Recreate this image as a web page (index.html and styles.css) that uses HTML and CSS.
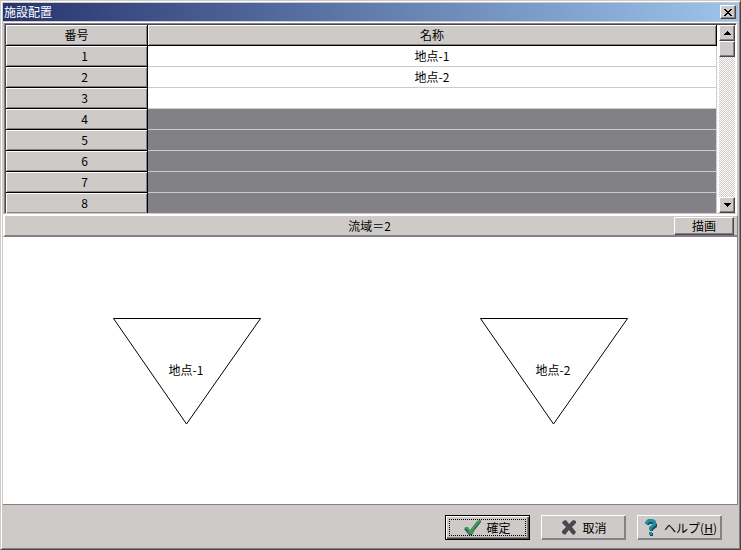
FILE: index.html
```html
<!DOCTYPE html>
<html lang="ja">
<head>
    <meta charset="UTF-8">
    <meta name="viewport" content="width=device-width, initial-scale=1.0">
    <title>施設配置</title>
    <link rel="stylesheet" href="styles.css">
</head>
<body>
    <div class="window">
        <header class="titlebar">
            <h1>施設配置</h1>
            <button type="button" class="close" aria-label="閉じる">
                <svg width="8" height="7" viewBox="0 0 8 7" shape-rendering="crispEdges">
                    <path d="M0 0h2v1h1v1h2V1h1V0h2v1H7v1H6v1H5v1h1v1h1v1h1v1H6V6H5V5H3v1H2v1H0V6h1V5h1V4h1V3H2V2H1V1H0z"/>
                </svg>
            </button>
        </header>

        <div class="grid-frame">
            <div class="grid-view">
                <table>
                    <thead>
                        <tr><th class="num">番号</th><th>名称</th></tr>
                    </thead>
                    <tbody>
                        <tr><th>1</th><td>地点-1</td></tr>
                        <tr><th>2</th><td>地点-2</td></tr>
                        <tr><th>3</th><td></td></tr>
                        <tr class="disabled"><th>4</th><td></td></tr>
                        <tr class="disabled"><th>5</th><td></td></tr>
                        <tr class="disabled"><th>6</th><td></td></tr>
                        <tr class="disabled"><th>7</th><td></td></tr>
                        <tr class="disabled"><th>8</th><td></td></tr>
                    </tbody>
                </table>
            </div>
            <div class="scrollbar">
                <button type="button" aria-label="上へ">
                    <svg width="7" height="4" viewBox="0 0 7 4" shape-rendering="crispEdges">
                        <path d="M3 0h1v1h1v1h1v1h1v1H0V3h1V2h1V1h1z"/>
                    </svg>
                </button>
                <div class="thumb"></div>
                <button type="button" class="down" aria-label="下へ">
                    <svg width="7" height="4" viewBox="0 0 7 4" shape-rendering="crispEdges">
                        <path d="M0 0h7v1H6v1H5v1H4v1H3V3H2V2H1V1H0z"/>
                    </svg>
                </button>
            </div>
        </div>

        <div class="toolbar">
            <span class="status">流域＝2</span>
            <button type="button" class="draw">描画</button>
        </div>

        <main class="canvas">
            <svg width="148" height="107" viewBox="0 0 148 107">
                <path class="node" d="M.5.5h147L73.5 106z"/>
                <text x="73" y="57">地点-1</text>
            </svg>
            <svg width="148" height="107" viewBox="0 0 148 107">
                <path class="node" d="M.5.5h147L73.5 106z"/>
                <text x="73" y="57">地点-2</text>
            </svg>
        </main>

        <footer class="actions">
            <button type="button" class="default">
                <svg width="17" height="16" viewBox="0 0 17 16">
                    <path fill="#27417c" d="M0 9l1 1 4 5h3l2-4 7-9V1h-2L6 11 3 8z"/>
                    <path fill="#3f9a45" d="M0 8l2-1h2l2 3 7-9 2-1h2v1l-6 7-3 6H5l-2-4z"/>
                </svg>
                確定
            </button>
            <button type="button">
                <svg width="17" height="15" viewBox="-2 0 17 15">
                    <path fill="#48484c" d="M1 1l3-1 3 4 4-4 3 1v2l-4 4 4 5-2 3-2-1-3-4-4 5-3-2v-2l4-4L0 3z"/>
                </svg>
                取消
            </button>
            <button type="button">
                <svg width="17" height="17" viewBox="-3 0 17 17">
                    <path fill="#1e4a68" d="M1 4l2-2h6l3 3v3l-4 3v1H5V9l3-3V5H5L4 6H2zM5 14h3v3H5z"/>
                    <path fill="#1f8f9f" d="M0 3l3-3h5l3 2v4L7 9v2H4V8l4-3V4L7 3H4L3 5H0zM4 13h3v3H4z"/>
                </svg>
                <span>ヘルプ(<u>H</u>)</span>
            </button>
        </footer>
    </div>
</body>
</html>
```
FILE: styles.css
```css
* {
    margin: 0;
    padding: 0;
    box-sizing: border-box;
}

:root {
    --face: #cecac7;
    --shadow: #828186;
    --dark: #48474c;
}

body {
    font-family: "Noto Sans CJK JP", sans-serif;
    font-size: 12px;
    line-height: 16px;
    color: #000;
}

button {
    font: inherit;
    color: inherit;
    display: flex;
    align-items: center;
    justify-content: center;
    background: var(--face);
    border: 1px solid;
    border-color: #fff var(--dark) var(--dark) #fff;
    box-shadow: inset -1px -1px var(--shadow);
}

.window {
    display: flex;
    flex-direction: column;
    min-height: 100vh;
    padding: 2px 2px 0 1px;
    background: var(--face);
    border: 1px solid;
    border-color: var(--face) var(--dark) var(--dark) var(--face);
    box-shadow: inset 1px 1px #fff, inset -1px -1px var(--shadow);
}

.titlebar {
    display: flex;
    align-items: center;
    justify-content: space-between;
    height: 18px;
    margin-left: 1px;
    padding: 0 2px 0 1px;
    background: linear-gradient(to right, #26346e, #9cc4ec);
}

.titlebar h1 {
    font-size: 12px;
    font-weight: normal;
    color: #fff;
}

.close {
    width: 16px;
    height: 14px;
}

.grid-frame {
    display: flex;
    height: 191px;
    margin: 2px 1px 0 2px;
    background: #fff;
    border: 1px solid;
    border-color: var(--shadow) #fff var(--face) var(--shadow);
    box-shadow: inset 1px 1px var(--dark), 0 -1px #fff;
    padding: 1px 1px 0 1px;
    overflow: hidden;
}

.grid-view {
    flex: 1;
    overflow: hidden;
    margin-right: 2px;
}

table {
    width: 100%;
    table-layout: fixed;
    border-collapse: separate;
    border-spacing: 0;
}

.num {
    width: 142px;
}

th,
td {
    height: 21px;
    font-weight: normal;
    line-height: 16px;
    text-align: center;
}

th {
    background: var(--face);
    border-right: 1px solid #000;
    border-bottom: 1px solid #000;
    box-shadow: inset 1px 1px #fff, inset -1px -1px var(--shadow);
}

tbody th {
    padding-left: 16px;
}

td {
    background: #fff;
    border-right: 1px solid var(--face);
    border-bottom: 1px solid var(--face);
}

.disabled td {
    background: var(--shadow);
}

.scrollbar {
    display: flex;
    flex-direction: column;
    width: 16px;
    background: repeating-conic-gradient(var(--face) 0 25%, #fff 0 50%) 0 0 / 2px 2px;
}

.scrollbar button,
.thumb {
    height: 16px;
    flex: none;
}

.thumb {
    background: var(--face);
    border: 1px solid;
    border-color: #fff var(--dark) var(--dark) #fff;
    box-shadow: inset -1px -1px var(--shadow);
}

.scrollbar .down {
    margin-top: auto;
}

.toolbar {
    display: flex;
    align-items: center;
    height: 23px;
    margin-left: 1px;
    padding-right: 3px;
    border: 2px solid;
    border-color: #fff var(--shadow) var(--shadow) #fff;
    border-right-width: 1px;
}

.status {
    flex: 1;
    padding-left: 60px;
    text-align: center;
}

.draw {
    width: 60px;
    height: 18px;
}

.canvas {
    flex: 1;
    display: grid;
    grid-template-columns: 1fr 1fr;
    place-items: center;
    margin-left: 1px;
    padding: 2px 0 0 1px;
    background: #fff;
    border-right: 1px solid var(--shadow);
    border-bottom: 1px solid var(--shadow);
}

.node {
    fill: none;
    stroke: #000;
}

.canvas text {
    text-anchor: middle;
}

.actions {
    display: flex;
    justify-content: flex-end;
    gap: 11px;
    padding: 10px 16px 9px;
}

.actions button {
    gap: 5px;
    width: 85px;
    height: 25px;
    border-color: #fff var(--shadow) var(--shadow) #fff;
    box-shadow: inset -1px -1px var(--shadow);
    white-space: nowrap;
}

.actions .default {
    border-color: #000;
    box-shadow: inset 1px 1px #fff, inset -1px -1px var(--dark), inset -2px -2px var(--shadow);
    outline: 1px dotted #000;
    outline-offset: -5px;
}
```
